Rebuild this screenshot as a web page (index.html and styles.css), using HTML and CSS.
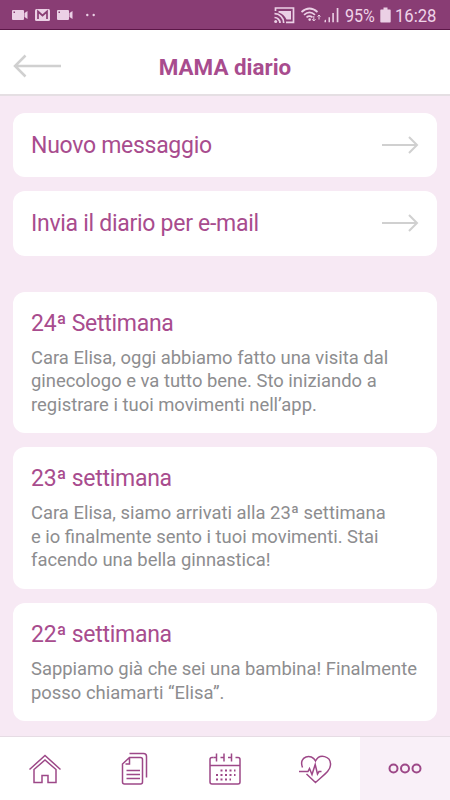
FILE: index.html
```
<!DOCTYPE html>
<html lang="it">
<head>
    <meta charset="UTF-8">
    <meta name="viewport" content="width=device-width, initial-scale=1.0">
    <title>MAMA diario</title>
    <link rel="stylesheet" href="styles.css">
</head>
<body>
    <div class="statusbar">
        <svg class="notifications" width="100" height="29" viewBox="0 0 100 29">
            <!-- cameras -->
            <path d="M13 10h10q1 0 1 1v8q0 1-1 1H13q-1 0-1-1v-8q0-1 1-1zM24.500 13l3-2v8l-3-2z"/>
            <rect class="hole" x="13.500" y="11.500" width="1.500" height="1.500"/>
            <path d="M58 10h10q1 0 1 1v8q0 1-1 1H58q-1 0-1-1v-8q0-1 1-1zM69.500 13l3-2v8l-3-2z"/>
            <rect class="hole" x="58.500" y="11.500" width="1.500" height="1.500"/>
            <!-- mail -->
            <rect x="35" y="9" width="15" height="12" rx="1.500"/>
            <path class="holeline" d="M38 19v-7.500l4.500 4 4.500-4V19"/>
            <circle cx="87.300" cy="15" r="1.200"/>
            <circle cx="93.700" cy="15" r="1.200"/>
        </svg>
        <div class="system">
            <svg width="68" height="29" viewBox="0 0 68 29">
                <!-- cast -->
                <path class="line" d="M2.500 11V8h18v14.300H13"/>
                <path d="M5.500 11h12.500v8.500h-4.500Q11 14 5.500 12.500z"/>
                <path class="line" d="M1.500 13.700a9 9 0 0 1 9.200 9.200M1.500 17.500a5.500 5.500 0 0 1 5.500 5.400"/>
                <circle cx="2.700" cy="21.500" r="1.500"/>
                <!-- wifi -->
                <path class="line" d="M28.500 12q8-7 16 0M31 14.800q5.500-5 11 0M33.500 17.300q3-2.500 6 0"/>
                <path class="thin" d="M40.800 16v5m-1.700-1.800 1.700 1.800 1.700-1.800M46 19.500v-4.500m-1.500 1.500 1.500-1.500 1.500 1.500"/>
                <circle cx="36.700" cy="19.600" r="1.300"/>
                <!-- signal -->
                <path d="M51.500 22.200v-1.700l1.500-1v2.700zM55.500 22.200v-5h1.500v5zM59.300 22.200V13h1.600v9.200zM63.700 22.200V8h1.700v14.200z"/>
            </svg>
            <span class="percent">95%</span>
            <svg class="battery" width="11" height="16" viewBox="0 0 11 16">
                <path d="M1 2.500h2.500V0.500h4v2h2.500q0.700 0 0.700 0.700v11.600q0 0.700-0.700 0.700H1q-0.700 0-0.700-0.700V3.200q0-0.700 0.700-0.700z"/>
            </svg>
            <span class="clock">16:28</span>
        </div>
    </div>

    <header class="topbar">
        <svg class="arrow back" width="48" height="24" viewBox="0 0 48 24">
            <path d="M48 12H2M12.500 1.500 2 12l10.500 10.500"/>
        </svg>
        <h1>MAMA diario</h1>
    </header>

    <main class="content">
        <a class="card action">
            <span>Nuovo messaggio</span>
            <svg class="arrow" width="37" height="18" viewBox="0 0 37 18"><path d="M0 9h35M27 1l8 8-8 8"/></svg>
        </a>
        <a class="card action">
            <span>Invia il diario per e-mail</span>
            <svg class="arrow" width="37" height="18" viewBox="0 0 37 18"><path d="M0 9h35M27 1l8 8-8 8"/></svg>
        </a>

        <section class="entries">
            <article class="card entry">
                <h2>24ª Settimana</h2>
                <p>Cara Elisa, oggi abbiamo fatto una visita dal<br>ginecologo e va tutto bene. Sto iniziando a<br>registrare i tuoi movimenti nell’app.</p>
            </article>
            <article class="card entry">
                <h2>23ª settimana</h2>
                <p>Cara Elisa, siamo arrivati alla 23ª settimana<br>e io finalmente sento i tuoi movimenti. Stai<br>facendo una bella ginnastica!</p>
            </article>
            <article class="card entry">
                <h2>22ª settimana</h2>
                <p>Sappiamo già che sei una bambina! Finalmente<br>posso chiamarti “Elisa”.</p>
            </article>
        </section>
    </main>

    <nav class="tabs">
        <a class="tab">
            <svg width="34" height="34" viewBox="0 0 34 34">
                <path d="M1.500 17.500 17 3.500l15.500 14"/>
                <path d="M6 17.500V30.500h8V23.500h6v7h8V17.500L17 8z"/>
            </svg>
        </a>
        <a class="tab">
            <svg width="34" height="34" viewBox="0 0 34 34">
                <path d="M11.500 1.500h14q3 0 3 3v21"/>
                <path d="M11.500 5.500h11q2 0 2 2V30q0 2-2 2H6.500q-2 0-2-2V12zM11.500 5.500V12H7.500"/>
                <path d="M8.500 18.500H22M8.500 22.500H22M8.500 26.500H22"/>
            </svg>
        </a>
        <a class="tab">
            <svg width="34" height="34" viewBox="0 0 34 34">
                <path d="M5.500 5.500H4q-2 0-2 2V30q0 2 2 2h26q2 0 2-2V7.500q0-2-2-2H27.500M2 13.500h30"/>
                <path d="M8.500 1.500v8M16 1.500v8M23.500 1.500v8M5.500 5.500h3M12.500 5.500h3.500M20 5.500h3.500"/>
                <path class="dots" d="M12.500 18.500h15M8 23h19.500M8 27.500h15"/>
            </svg>
        </a>
        <a class="tab">
            <svg width="34" height="34" viewBox="0 0 34 34">
                <path d="M4.500 15.500C0 4 14 1 17.500 9 21.500 1 33 4 32.500 13 32.300 18.500 27 22 17.500 30.500L8.500 22"/>
                <path d="M1 19.500h9l1.500-3 2.500 6 3.200-10 2.300 9.500 1.500-2.500h2.500"/>
            </svg>
        </a>
        <a class="tab active">
            <svg width="34" height="34" viewBox="0 0 34 34">
                <circle cx="5.500" cy="16.500" r="4"/>
                <circle cx="17" cy="16.500" r="4"/>
                <circle cx="28.500" cy="16.500" r="4"/>
            </svg>
        </a>
    </nav>
</body>
</html>
```
FILE: styles.css
```
* {
    box-sizing: border-box;
}
body {
    margin: 0;
    height: 800px;
    display: flex;
    flex-direction: column;
    overflow: hidden;
    font-family: Roboto, "Liberation Sans", sans-serif;
    background-color: #f7e9f4;
    color: #a84c8e;
}
h1, h2, p {
    margin: 0;
}

/* phone status bar */
.statusbar {
    height: 30px;
    flex: none;
    display: flex;
    justify-content: space-between;
    background-color: #893d74;
    border-bottom: 1px solid #5c1748;
    color: #efd3e8;
    font-size: 18.500px;
}
.statusbar svg {
    fill: #ebd0e5;
}
.statusbar .hole {
    fill: #893d74;
}
.statusbar .holeline {
    fill: none;
    stroke: #893d74;
    stroke-width: 1.7;
}
.statusbar .line {
    fill: none;
    stroke: #ebd0e5;
    stroke-width: 1.7;
}
.statusbar .thin {
    fill: none;
    stroke: #ebd0e5;
    stroke-width: 1;
}
.system {
    display: flex;
    align-items: center;
    padding-right: 14px;
}
.percent {
    width: 30px;
    margin-left: 4px;
    transform: scaleX(0.87);
    transform-origin: left;
    padding-top: 2px;
}
.battery {
    margin-left: 5px;
    margin-top: 1px;
}
.clock {
    width: 41px;
    margin-left: 4px;
    padding-top: 2px;
    transform: scaleX(0.9);
    transform-origin: left;
}

/* title */
.topbar {
    height: 66px;
    flex: none;
    display: grid;
    grid-template-columns: 62px 1fr 62px;
    align-items: center;
    padding-top: 8px;
    background-color: #fff;
    border-bottom: 2px solid #e5dfe3;
}
.topbar h1 {
    padding-top: 1px;
    font-size: 22.400px;
    font-weight: 700;
    line-height: 26px;
    text-align: center;
}
.arrow {
    fill: none;
    stroke: #d0d0d0;
    stroke-width: 2;
}
.back {
    margin-left: 13px;
    stroke-width: 2.5;
}

/* cards */
.content {
    flex: 1;
    padding: 16.500px 13px 0;
}
.card {
    display: block;
    background-color: #fff;
    border-radius: 12px;
    margin-bottom: 14px;
}
.action {
    height: 64.500px;
    display: flex;
    align-items: center;
    justify-content: space-between;
    padding: 0 18px;
    font-size: 23px;
    letter-spacing: -0.28px;
}
.action span {
    padding-top: 1px;
}
.entries {
    padding-top: 22px;
}
.entry {
    padding: 18px 18px 17px;
}
.entry h2 {
    font-size: 23px;
    letter-spacing: -0.28px;
    font-weight: 400;
    line-height: 27px;
    margin-bottom: 9px;
}
.entry p {
    color: #8d8d8f;
    font-size: 18.420px;
    line-height: 23.600px;
    white-space: nowrap;
}

/* bottom navigation */
.tabs {
    height: 64px;
    flex: none;
    display: grid;
    grid-template-columns: repeat(5, 1fr);
    background-color: #fff;
    border-top: 1px solid #e6dce4;
}
.tab {
    display: flex;
    align-items: center;
    justify-content: center;
}
.tab.active {
    background-color: #f9f0f8;
}
.tab svg {
    fill: none;
    stroke: #9d4888;
    stroke-width: 1.5;
}
.tab.active svg {
    stroke-width: 2;
}
.tab .dots {
    stroke-width: 2;
    stroke-dasharray: 2 2.500;
}
```
